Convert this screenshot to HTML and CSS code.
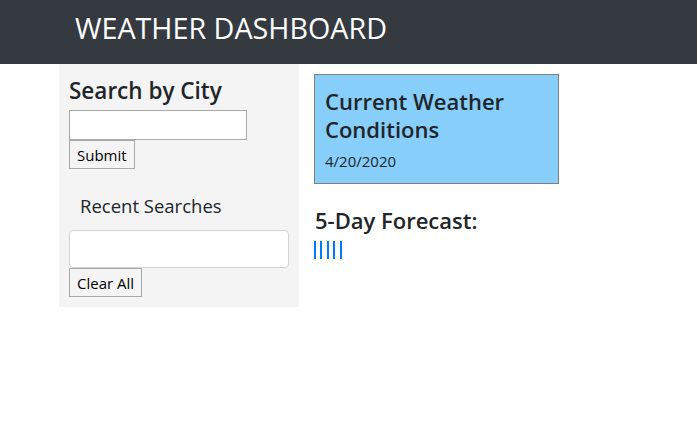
FILE: index.html
```html
<!DOCTYPE html>
<html lang="en">
<head>
<meta charset="utf-8">
<title>Weather Dashboard</title>
<link rel="stylesheet" href="styles.css">
</head>
<body>
<header class="topbar">
  <h1 class="brand">WEATHER DASHBOARD</h1>
</header>
<div class="layout">
  <aside class="sidebar">
    <h3 class="side-title">Search by City</h3>
    <input class="city-input" type="text">
    <button class="btn">Submit</button>
    <h5 class="recent-title">Recent Searches</h5>
    <div class="recent-box"></div>
    <button class="btn">Clear All</button>
  </aside>
  <main class="main">
    <section class="current">
      <h3 class="current-title">Current Weather Conditions</h3>
      <p class="current-date">4/20/2020</p>
    </section>
    <h4 class="forecast-title">5-Day Forecast:</h4>
    <div class="forecast">
      <div class="fc-card"></div>
      <div class="fc-card"></div>
      <div class="fc-card"></div>
      <div class="fc-card"></div>
      <div class="fc-card"></div>
    </div>
  </main>
</div>
</body>
</html>
```
FILE: styles.css
```css
* { box-sizing: border-box; }
body {
  margin: 0;
  font-family: "Open Sans", "Noto Sans", sans-serif;
  color: #212529;
  background: #fff;
}
.topbar {
  background: #343a40;
  height: 64px;
  padding-left: 75px;
  display: flex;
  align-items: center;
}
.brand {
  margin: 0;
  color: #fff;
  font-weight: 400;
  font-size: 28.7px;
  line-height: 1;
  position: relative;
  top: -4px;
}
.layout {
  display: flex;
  align-items: flex-start;
  padding-left: 59px;
}
.sidebar {
  width: 240px;
  background: #f4f4f4;
  padding: 12px 10px 10px 10px;
  display: flex;
  flex-direction: column;
  align-items: flex-start;
}
.side-title {
  margin: 0 0 4px 0;
  font-size: 22.5px;
  font-weight: 600;
  line-height: 30px;
}
.city-input {
  width: 178px;
  height: 30px;
  border: 1px solid #a9a9a9;
  background: #fff;
  margin: 0;
  padding: 0;
}
.btn {
  font-family: "Open Sans", "Noto Sans", sans-serif;
  font-size: 15px;
  height: 29px;
  padding: 0 7px;
  margin: 0;
  border: 1px solid #a9a9a9;
  background: #f4f4f4;
  color: #000;
  border-radius: 0;
}
.recent-title {
  margin: 24px 0 12px 11px;
  font-size: 18.5px;
  font-weight: 400;
  line-height: 25px;
}
.recent-box {
  width: 220px;
  height: 38px;
  background: #fff;
  border: 1px solid #ced4da;
  border-radius: 4px;
}
.main {
  padding-left: 15px;
  padding-top: 10px;
}
.current {
  width: 245px;
  background: #87cefa;
  border: 1px solid #808080;
  padding: 12px 10px 11px 10px;
}
.current-title {
  margin: 0 0 7px 0;
  font-size: 22px;
  font-weight: 600;
  line-height: 28px;
}
.current-date {
  margin: 0;
  font-size: 15px;
  line-height: 22px;
}
.forecast-title {
  margin: 21px 0 6px 1px;
  font-size: 22px;
  font-weight: 600;
  line-height: 30px;
}
.forecast {
  display: flex;
  gap: 4.4px;
}
.fc-card {
  width: 2px;
  height: 18px;
  background: #007bff;
}
```
